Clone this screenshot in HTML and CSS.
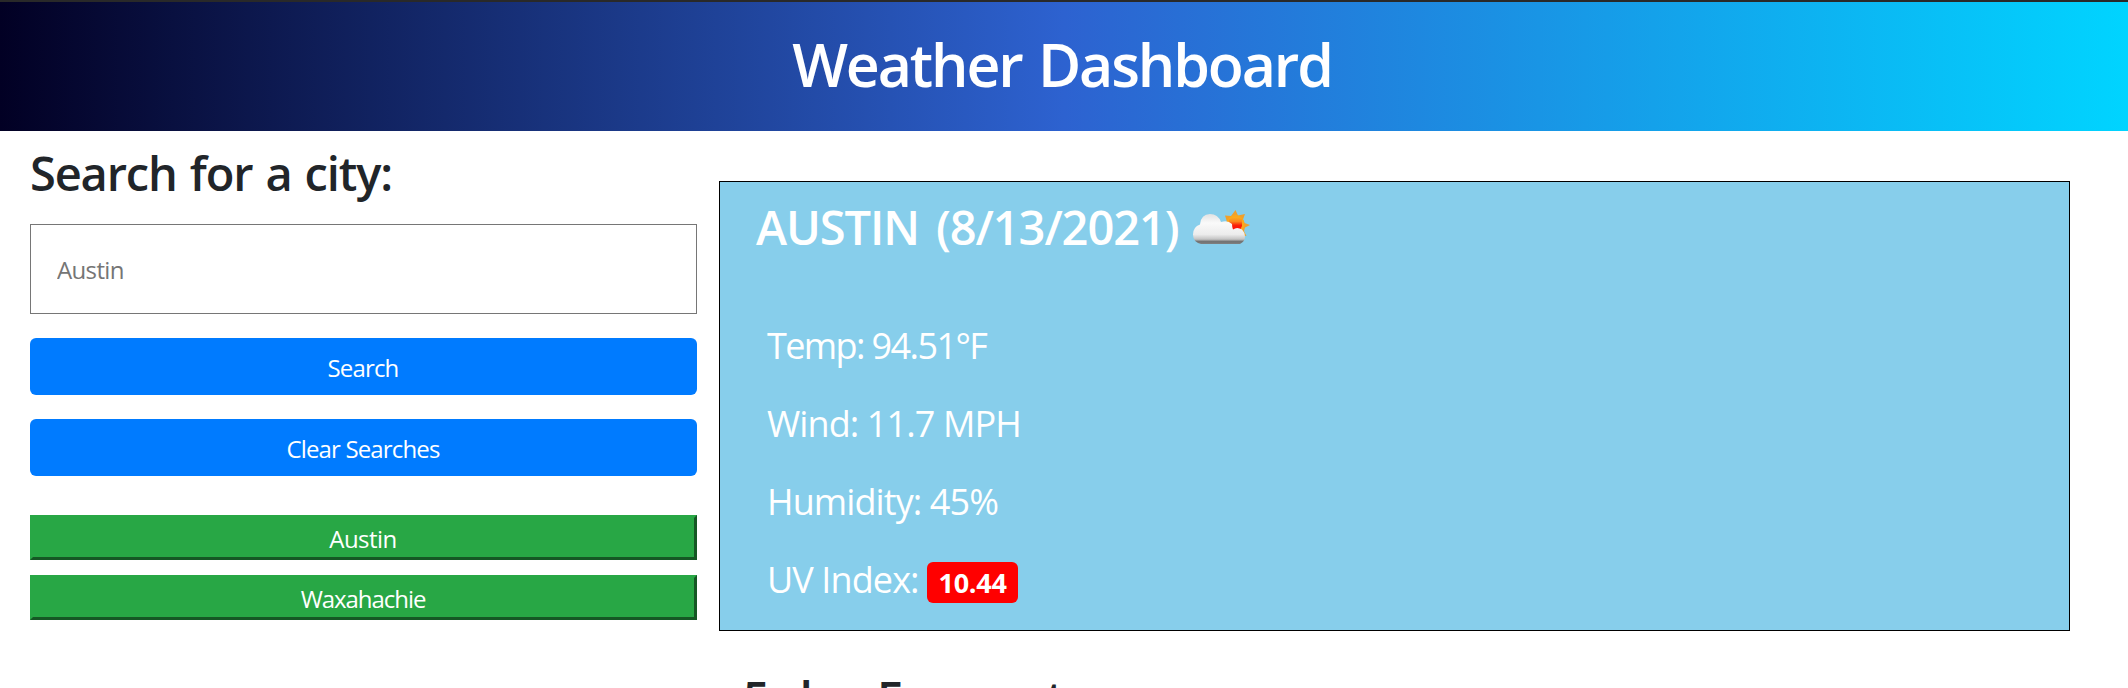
FILE: index.html
```
<!DOCTYPE html>
<html lang="en">
<head>
<meta charset="utf-8">
<title>Weather Dashboard</title>
<link rel="stylesheet" href="styles.css">
</head>
<body>
<header class="header"><h1 class="title">Weather Dashboard</h1></header>
<main class="layout">
  <aside class="sidebar">
    <h2 class="search-title">Search for a city:</h2>
    <input class="city-input" type="text" placeholder="Austin">
    <button class="btn btn-search">Search</button>
    <button class="btn btn-clear">Clear Searches</button>
    <div class="history">
      <button class="history-item">Austin</button>
      <button class="history-item history-long">Waxahachie</button>
    </div>
  </aside>
  <section class="content">
    <article class="current">
      <h2 class="city">AUSTIN (8/13/2021)
        <svg class="icon" viewBox="0 0 60 36">
          <defs>
            <linearGradient id="cloud" x1="0" y1="0" x2="0" y2="1">
              <stop offset="0" stop-color="#e2e2e2"/><stop offset=".3" stop-color="#fafafa"/>
              <stop offset=".68" stop-color="#ececec"/><stop offset=".84" stop-color="#c4c4c4"/><stop offset=".92" stop-color="#707070"/><stop offset="1" stop-color="#808080"/>
            </linearGradient>
            <linearGradient id="sun" x1="0" y1="0" x2="0" y2="1">
              <stop offset="0" stop-color="#fcae20"/><stop offset=".3" stop-color="#fb861c"/><stop offset=".55" stop-color="#fa2008"/><stop offset="1" stop-color="#f00"/>
            </linearGradient>
          </defs>
          <path fill="#f0a02c" d="M43.500 0L46 5.500l7-1.500-2 5.500 1.500 3.500 5.500 2-5 2.500-1 3.500 2.500 5-7-1L36 20l-1-8-2-6.500 6 .5z"/>
          <circle cx="43.500" cy="14" r="9" fill="#fba81c"/>
          <path fill="url(#sun)" d="M37 9.500q6.500-5 13 0v6.500l-3 6H37z"/>
          <path fill="url(#cloud)" d="M9 34Q1 32 1 24.500 1 17 8 14.500 9 4 18 4 26 4 29 12q7-2 11 2 0 3 1 5.500 4-3 9 0 3 3 3 7 0 5-5 7.500z"/>
        </svg>
      </h2>
      <p class="stat stat-temp">Temp: 94.51°F</p>
      <p class="stat stat-wind">Wind: 11.7 MPH</p>
      <p class="stat">Humidity: 45%</p>
      <p class="stat">UV Index: <span class="badge">10.44</span></p>
    </article>
    <h2 class="forecast">5-day Forecast:</h2>
  </section>
</main>
</body>
</html>
```
FILE: styles.css
```
* { box-sizing: border-box; }
html, body { height: 100%; }
body {
  margin: 0;
  overflow: hidden;
  background: #fff;
  color: #212529;
  font-family: "Open Sans", "Noto Sans", sans-serif;
  font-size: 24px;
}
h1, h2, p { margin: 0; }
h1, h2 { font-weight: 600; }
.header {
  height: 131px;
  padding: 26px 4px 0 0;
  border-top: 2px solid #292929;
  background: linear-gradient(90deg, #020024 0%, #2d62d0 50%, #00d4ff 100%);
}
.title {
  color: #fff;
  font-size: 59px;
  line-height: 72px;
  letter-spacing: -2.1px;
  word-spacing: 3px;
  text-align: center;
}
.layout { display: flex; gap: 22px; padding-left: 30px; }
.sidebar { display: flex; flex-direction: column; flex: none; width: 667px; padding-top: 13px; }
.search-title { font-size: 47px; line-height: 58px; letter-spacing: -1.15px; word-spacing: 2px; }
.city-input {
  height: 90px;
  margin: 22px 0 24px;
  padding: 0 26px;
  border: 1px solid #767676;
  border-radius: 0;
  font: inherit;
  letter-spacing: -0.65px;
}
.city-input::placeholder { color: #757575; }
.btn {
  height: 57px;
  margin: 0 0 24px;
  padding: 2px 1px 0 0;
  border: 0;
  border-radius: 6px;
  background: #007bff;
  color: #fff;
  font: inherit;
  letter-spacing: -0.85px;
}
.history { display: flex; flex-direction: column; gap: 15px; margin-top: 15px; }
.history-item {
  height: 45px;
  padding: 2px 1px 0 0;
  border: 3px solid;
  border-color: #28a745 #155724 #155724 #28a745;
  background: #28a745;
  color: #fff;
  font: inherit;
  line-height: 33px;
  letter-spacing: -0.55px;
}
.history-long { letter-spacing: -1.05px; }
.content { width: 1351px; padding-top: 50px; }
.current {
  height: 450px;
  padding: 16px 36px 0;
  border: 1px solid #000;
  background: #87ceeb;
  color: #fff;
}
.city {
  display: flex;
  gap: 13px;
  height: 109px;
  font-size: 47px;
  line-height: 58px;
  letter-spacing: -1.1px;
  word-spacing: 6px;
}
.icon { width: 60px; height: 36px; margin-top: 12px; }
.stat {
  height: 78px;
  padding-left: 11px;
  font-size: 36px;
  line-height: 78px;
  letter-spacing: -0.9px;
}
.stat-temp { letter-spacing: -1.6px; }
.badge {
  display: inline-block;
  width: 91px;
  height: 41px;
  border-radius: 6px;
  background: #f00;
  font-size: 27px;
  font-weight: 700;
  line-height: 41px;
  letter-spacing: -0.25px;
  text-align: center;
}
.forecast { padding: 38px 0 0 24px; font-size: 47px; line-height: 58px; letter-spacing: -0.8px; word-spacing: 3px; }
```
